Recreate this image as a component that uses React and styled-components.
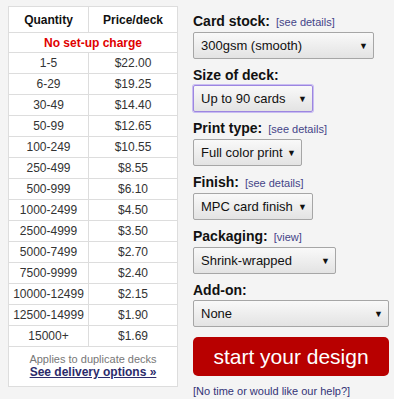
import styled, { createGlobalStyle } from "styled-components";

const GlobalStyle = createGlobalStyle`
  body {
    margin: 0;
    background: #f4f4f4;
    font-family: "Liberation Sans", Arial, sans-serif;
  }
`;

const priceList = [
  ["1-5", "$22.00"],
  ["6-29", "$19.25"],
  ["30-49", "$14.40"],
  ["50-99", "$12.65"],
  ["100-249", "$10.55"],
  ["250-499", "$8.55"],
  ["500-999", "$6.10"],
  ["1000-2499", "$4.50"],
  ["2500-4999", "$3.50"],
  ["5000-7499", "$2.70"],
  ["7500-9999", "$2.40"],
  ["10000-12499", "$2.15"],
  ["12500-14999", "$1.90"],
  ["15000+", "$1.69"],
];

const options = [
  { label: "Card stock:", link: "[see details]", value: "300gsm (smooth)", width: 181 },
  { label: "Size of deck:", value: "Up to 90 cards", width: 120, focused: true },
  { label: "Print type:", link: "[see details]", value: "Full color print", width: 109 },
  { label: "Finish:", link: "[see details]", value: "MPC card finish", width: 120 },
  { label: "Packaging:", link: "[view]", value: "Shrink-wrapped", width: 143 },
  { label: "Add-on:", value: "None", width: 196 },
];

function App() {
  return (
    <>
      <GlobalStyle />
      <Page>
        <PriceTable>
          <thead>
            <tr>
              <HeadCell $width={79}>Quantity</HeadCell>
              <HeadCell>Price/deck</HeadCell>
            </tr>
          </thead>
          <tbody>
            <tr>
              <NoticeCell colSpan={2}>No set-up charge</NoticeCell>
            </tr>
            {priceList.map(([qty, price]) => (
              <tr key={qty}>
                <Cell>{qty}</Cell>
                <Cell>{price}</Cell>
              </tr>
            ))}
            <tr>
              <FooterCell colSpan={2}>
                <Note>Applies to duplicate decks</Note>
                <DeliveryLink href="#">See delivery options »</DeliveryLink>
              </FooterCell>
            </tr>
          </tbody>
        </PriceTable>

        <Options>
          {options.map((opt) => (
            <Group key={opt.label}>
              <LabelRow>
                <Label>{opt.label}</Label>
                {opt.link && <SmallLink href="#">{opt.link}</SmallLink>}
              </LabelRow>
              <Select $width={opt.width} $focused={opt.focused}>
                <span>{opt.value}</span>
                <Arrow>▼</Arrow>
              </Select>
            </Group>
          ))}
          <StartButton>start your design</StartButton>
          <HelpLink href="#">[No time or would like our help?]</HelpLink>
        </Options>
      </Page>
    </>
  );
}

export default App;

const Page = styled.div`
  display: flex;
  align-items: flex-start;
  gap: 15px;
  padding: 6px 0 0 8px;
`;

const PriceTable = styled.table`
  width: 170px;
  border-collapse: collapse;
  background: #fff;
  border: 1px solid #ddd;
  font-size: 12px;
  color: #333;
  text-align: center;
`;

const HeadCell = styled.th`
  width: ${(p) => (p.$width ? `${p.$width}px` : "auto")};
  height: 25px;
  padding: 0;
  border: 1px solid #ddd;
  font-weight: bold;
  color: #111;
`;

const Cell = styled.td`
  height: 20px;
  padding: 0;
  border: 1px solid #ddd;
`;

const NoticeCell = styled(Cell)`
  height: 19px;
  color: #e00000;
  font-weight: bold;
`;

const FooterCell = styled.td`
  padding: 6px 0 7px;
  border: 1px solid #ddd;
  line-height: 13px;
`;

const Note = styled.div`
  font-size: 11px;
  color: #777;
`;

const DeliveryLink = styled.a`
  display: block;
  font-size: 12px;
  font-weight: bold;
  color: #2b2b6b;
  text-decoration: underline;
`;

const Options = styled.div`
  display: flex;
  flex-direction: column;
  width: 196px;
  padding-top: 5px;
`;

const Group = styled.div`
  display: flex;
  flex-direction: column;
  margin-bottom: 6px;
`;

const LabelRow = styled.div`
  display: flex;
  align-items: baseline;
  gap: 6px;
  line-height: 20px;
`;

const Label = styled.span`
  font-size: 14px;
  font-weight: bold;
  color: #111;
`;

const SmallLink = styled.a`
  font-size: 11px;
  color: #444488;
  text-decoration: none;
`;

const Select = styled.div`
  box-sizing: border-box;
  display: flex;
  align-items: center;
  justify-content: space-between;
  width: ${(p) => p.$width}px;
  height: 27px;
  padding: 0 5px 0 7px;
  font-size: 13px;
  color: #111;
  white-space: nowrap;
  border: 1px solid ${(p) => (p.$focused ? "#9c86e0" : "#a6a6a6")};
  box-shadow: ${(p) => (p.$focused ? "0 0 0 1px #c9bdf2" : "none")};
  border-radius: 2px;
  background: linear-gradient(#f9f9f9, #e3e3e3);
`;

const Arrow = styled.span`
  flex-shrink: 0;
  font-size: 9px;
  color: #111;
  margin-left: 2px;
`;

const StartButton = styled.button`
  margin-top: 4px;
  height: 39px;
  width: 196px;
  border: none;
  border-radius: 5px;
  background: #b80000;
  color: #fff;
  font-family: "Liberation Sans", Arial, sans-serif;
  font-size: 21px;
  cursor: pointer;
`;

const HelpLink = styled.a`
  margin-top: 8px;
  font-size: 11px;
  line-height: 14px;
  color: #333377;
  text-decoration: none;
`;
